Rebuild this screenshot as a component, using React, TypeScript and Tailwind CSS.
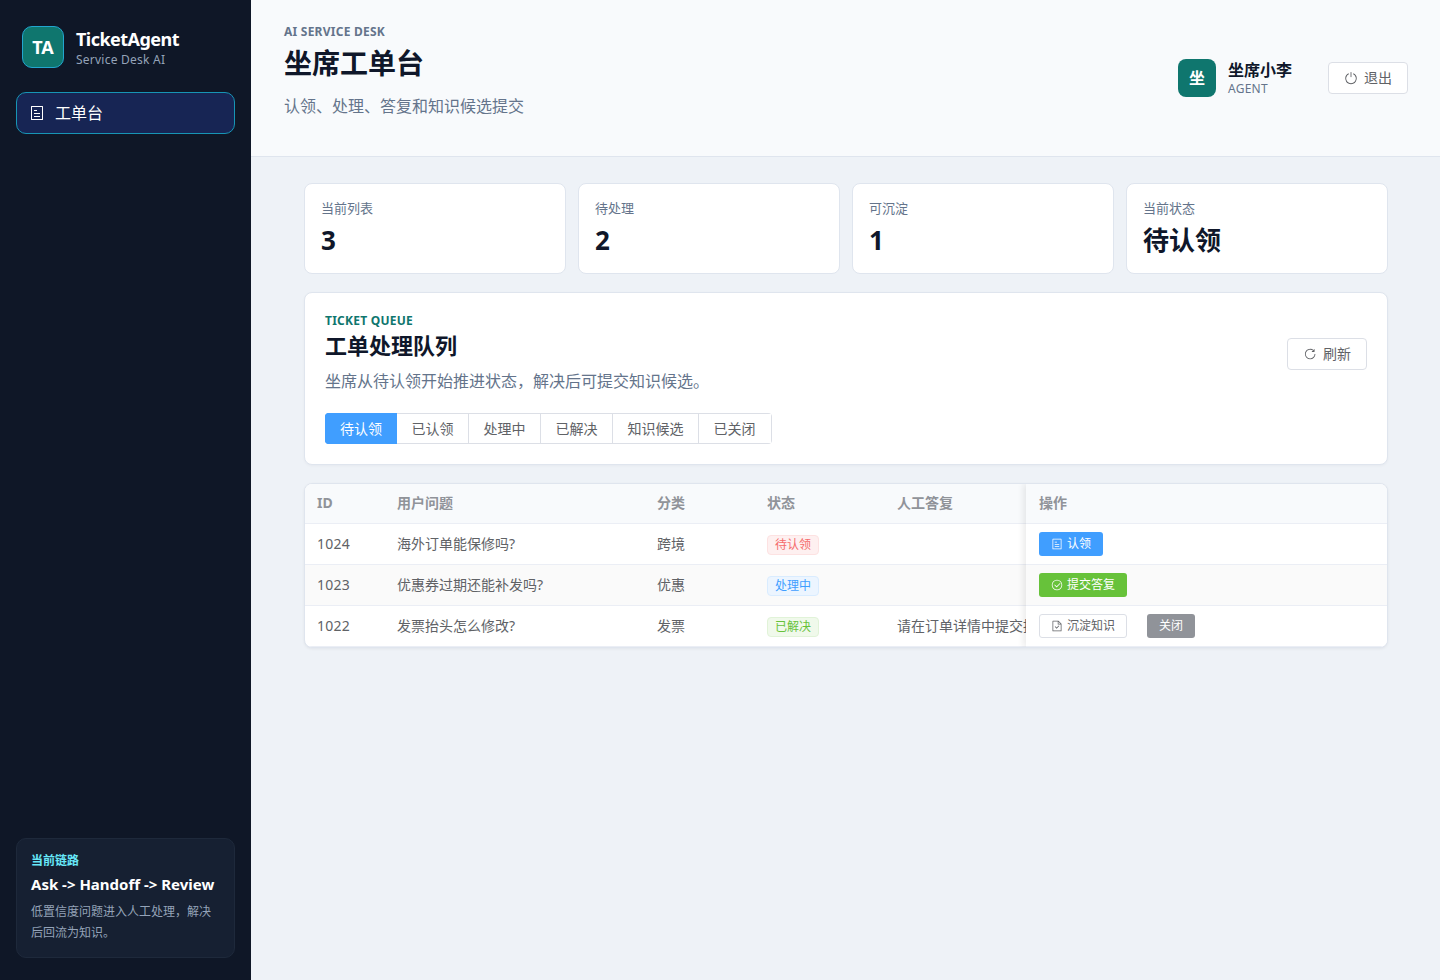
import type { ReactNode } from 'react';

const FONT = "font-['Noto_Sans','Noto_Sans_CJK_SC',sans-serif]";

// icon outlines, all on a 1024 grid
const ICONS: Record<string, string> = {
  tickets:
    'M192 128v768h640V128zm-32-64h704a32 32 0 0 1 32 32v832a32 32 0 0 1-32 32H160a32 32 0 0 1-32-32V96a32 32 0 0 1 32-32m160 448h384v64H320zm0-192h192v64H320zm0 384h384v64H320z',
  check:
    'M512 896a384 384 0 1 0 0-768 384 384 0 0 0 0 768m0 64a448 448 0 1 1 0-896 448 448 0 0 1 0 896M745.344 361.344a32 32 0 0 1 45.312 45.312l-288 288a32 32 0 0 1-45.312 0l-160-160a32 32 0 1 1 45.312-45.312L480 626.752z',
  docCheck:
    'M805.504 320 640 154.496V320zM832 384H576V128H192v768h640zM160 64h480l256 256v608a32 32 0 0 1-32 32H160a32 32 0 0 1-32-32V96a32 32 0 0 1 32-32m318.4 582.144 180.992-180.992L704.64 510.4 478.4 736.64 320 578.304l45.248-45.248z',
  power:
    'M352 159.872V230.4a352 352 0 1 0 320 0v-70.528A416.128 416.128 0 0 1 512 960a416 416 0 0 1-160-800.128zM512 64q32 0 32 32v320q0 32-32 32t-32-32V96q0-32 32-32',
  refresh:
    'M784.512 230.272v-50.56a32 32 0 1 1 64 0v149.056a32 32 0 0 1-32 32H667.52a32 32 0 1 1 0-64h92.992A320 320 0 1 0 524.8 833.152a320 320 0 0 0 320-320h64a384 384 0 0 1-384 384 384 384 0 0 1-384-384 384 384 0 0 1 644.352-282.88z',
};

function Icon({ name, className }: { name: string; className: string }) {
  return (
    <svg viewBox="0 0 1024 1024" fill="currentColor" className={className}>
      <path d={ICONS[name]} />
    </svg>
  );
}

function SmallButton({ icon, className, children }: { icon?: string; className: string; children: ReactNode }) {
  return (
    <button className={`inline-flex h-6 items-center justify-center gap-1 rounded-[3px] text-xs ${className}`}>
      {icon && <Icon name={icon} className="h-3 w-3" />}
      {children}
    </button>
  );
}

function Tag({ className, children }: { className: string; children: ReactNode }) {
  return (
    <span className={`mt-0.5 inline-flex h-5 w-[52px] items-center justify-center rounded-[4px] border text-xs ${className}`}>
      {children}
    </span>
  );
}

function Stat({ label, value }: { label: string; value: string }) {
  return (
    <div className="h-[91px] rounded-lg border border-[#dfe5ee] bg-white px-4 pt-[14px]">
      <div className="text-[13px] leading-5 text-[#64748b]">{label}</div>
      <div className="mt-1 text-[26px] font-bold leading-9 text-[#0f172a]">{value}</div>
    </div>
  );
}

const tabs = ['待认领', '已认领', '处理中', '已解决', '知识候选', '已关闭'];

const TAG_RED = 'border-[#fde2e2] bg-[#fef0f0] text-[#f56c6c]';
const TAG_BLUE = 'border-[#d9ecff] bg-[#ecf5ff] text-[#409eff]';
const TAG_GREEN = 'border-[#e1f3d8] bg-[#f0f9eb] text-[#67c23a]';

const rows = [
  {
    id: '1024',
    question: '海外订单能保修吗?',
    category: '跨境',
    status: <Tag className={TAG_RED}>待认领</Tag>,
    reply: '',
    actions: (
      <SmallButton icon="tickets" className="bg-[#409eff] px-3 text-white">
        认领
      </SmallButton>
    ),
  },
  {
    id: '1023',
    question: '优惠券过期还能补发吗?',
    category: '优惠',
    status: <Tag className={TAG_BLUE}>处理中</Tag>,
    reply: '',
    actions: (
      <SmallButton icon="check" className="bg-[#67c23a] px-3 text-white">
        提交答复
      </SmallButton>
    ),
  },
  {
    id: '1022',
    question: '发票抬头怎么修改?',
    category: '发票',
    status: <Tag className={TAG_GREEN}>已解决</Tag>,
    reply: '请在订单详情中提交抬头修改申请',
    actions: (
      <div className="flex gap-5">
        <SmallButton icon="docCheck" className="border border-[#dcdfe6] bg-white px-[11px] text-[#606266]">
          沉淀知识
        </SmallButton>
        <SmallButton className="bg-[#909399] px-3 text-white">关闭</SmallButton>
      </div>
    ),
  },
];

const COLS = 'grid grid-cols-[80px_260px_110px_130px_141px] items-center';

export default function App() {
  return (
    <div className={`flex min-h-screen bg-[#eef2f7] ${FONT}`}>
      {/* Sidebar */}
      <aside className="flex w-[251px] shrink-0 flex-col justify-between bg-[#0f1727] px-4 pb-[22px] pt-[26px]">
        <div>
          <div className="flex items-center gap-3 pl-1.5">
            <div className="flex h-[42px] w-[42px] items-center justify-center rounded-[10px] border border-[#22a6cf] bg-[#0f766e] text-lg font-bold text-white">
              TA
            </div>
            <div>
              <div className="text-lg font-bold leading-[26px] tracking-[-0.03em] text-white">TicketAgent</div>
              <div className="text-xs leading-4 tracking-[0.02em] text-[#94a3b8]">Service Desk AI</div>
            </div>
          </div>
          <div className="mt-[24px] flex h-[42px] items-center gap-[10px] rounded-[10px] border border-[#1795b5] bg-[#172554] pl-3 text-base text-white">
            <Icon name="tickets" className="h-4 w-4 text-white" />
            工单台
          </div>
        </div>
        <div className="h-[120px] rounded-[10px] border border-[#1e293b] bg-[#162032] px-[14px] pt-[12px]">
          <div className="text-xs font-bold leading-5 text-[#67e8f9]">当前链路</div>
          <div className="mt-[3px] text-[15px] font-bold leading-5 text-white">Ask -&gt; Handoff -&gt; Review</div>
          <div className="mt-[7px] text-xs leading-[21px] text-[#94a3b8]">
            低置信度问题进入人工处理，解决后回流为知识。
          </div>
        </div>
      </aside>

      <div className="min-w-0 flex-1">
        {/* Header */}
        <header className="flex h-[157px] items-center justify-between border-b border-[#dfe5ee] bg-[#f8fafc] pl-[33px] pr-8">
          <div className="-mt-[15px]">
            <div className="text-xs font-bold leading-4 tracking-[0.02em] text-[#64748b]">AI SERVICE DESK</div>
            <h1 className="mt-[3px] text-[28px] font-bold leading-10 text-[#0f172a]">坐席工单台</h1>
            <p className="mt-[11px] text-base leading-6 text-[#64748b]">认领、处理、答复和知识候选提交</p>
          </div>
          <div className="flex items-center">
            <div className="flex h-[38px] w-[38px] items-center justify-center rounded-lg bg-[#0f766e] text-base font-bold text-white">
              坐
            </div>
            <div className="ml-3 w-[100px]">
              <div className="text-base font-bold leading-[22px] text-[#0f172a]">坐席小李</div>
              <div className="text-xs leading-4 tracking-[0.02em] text-[#64748b]">AGENT</div>
            </div>
            <button className="flex h-8 w-20 items-center justify-center gap-[6px] rounded border border-[#dcdfe6] bg-white text-sm text-[#606266]">
              <Icon name="power" className="h-3.5 w-3.5" />
              退出
            </button>
          </div>
        </header>

        <main className="pl-[53px] pr-[52px] pt-[26px]">
          {/* Stats */}
          <div className="grid grid-cols-4 gap-3">
            <Stat label="当前列表" value="3" />
            <Stat label="待处理" value="2" />
            <Stat label="可沉淀" value="1" />
            <Stat label="当前状态" value="待认领" />
          </div>

          {/* Queue panel */}
          <section className="mt-[18px] h-[173px] rounded-lg border border-[#dfe5ee] bg-white px-5 pt-5 shadow-[0_1px_3px_rgba(15,23,42,0.04)]">
            <div className="flex items-center justify-between">
              <div>
                <div className="text-xs font-bold leading-4 tracking-[0.02em] text-[#0f766e]">TICKET QUEUE</div>
                <h2 className="text-[22px] font-bold leading-8 text-[#0f172a]">工单处理队列</h2>
                <p className="mt-2 text-base leading-6 text-[#64748b]">
                  坐席从待认领开始推进状态，解决后可提交知识候选。
                </p>
              </div>
              <button className="mt-0.5 flex h-8 w-20 items-center justify-center gap-[6px] rounded border border-[#dcdfe6] bg-white text-sm text-[#606266]">
                <Icon name="refresh" className="h-3.5 w-3.5" />
                刷新
              </button>
            </div>
            <div className="mt-[20px] inline-flex h-[31px] overflow-hidden rounded">
              {tabs.map((tab, i) => (
                <div
                  key={tab}
                  className={`flex items-center border-y border-r text-sm ${
                    i === 0
                      ? 'border-l border-[#409eff] bg-[#409eff] px-[14px] text-white'
                      : i === tabs.length - 1
                        ? 'border-[#dcdfe6] pl-[14.5px] pr-[15px] text-[#606266]'
                        : 'border-[#dcdfe6] px-[14.5px] text-[#606266]'
                  }`}
                >
                  {tab}
                </div>
              ))}
            </div>
          </section>

          <div className="mt-[18px] flex overflow-hidden rounded-lg border border-[#dfe5ee] bg-white text-sm text-[#606266] shadow-[0_1px_3px_rgba(15,23,42,0.06)]">
            <div className="w-[721px] shrink-0">
              <div className={`${COLS} h-10 border-b border-[#ebeef5] bg-[#f8fafc] pb-0.5 font-bold text-[#909399]`}>
                {['ID', '用户问题', '分类', '状态', '人工答复'].map((h) => (
                  <div key={h} className="px-3">
                    {h}
                  </div>
                ))}
              </div>
              {rows.map((row, i) => (
                <div key={row.id} className={`${COLS} h-[41px] border-b border-[#ebeef5] ${i === 1 ? 'bg-[#fafafa]' : ''}`}>
                  <div className="px-3 tracking-[0.02em]">{row.id}</div>
                  <div className="px-3">{row.question}</div>
                  <div className="px-3">{row.category}</div>
                  <div className="flex px-3">{row.status}</div>
                  <div className="overflow-hidden whitespace-nowrap px-3">{row.reply}</div>
                </div>
              ))}
            </div>
            <div className="z-10 flex-1 shadow-[-3px_0_6px_rgba(0,0,0,0.08)]">
              <div className="flex h-10 items-center border-b border-[#ebeef5] bg-[#f8fafc] pb-0.5 pl-[13px] font-bold text-[#909399]">操作</div>
              {rows.map((row, i) => (
                <div
                  key={row.id}
                  className={`flex h-[41px] items-center border-b border-[#ebeef5] pl-[13px] ${i === 1 ? 'bg-[#fafafa]' : 'bg-white'}`}
                >
                  {row.actions}
                </div>
              ))}
            </div>
          </div>
        </main>
      </div>
    </div>
  );
}
